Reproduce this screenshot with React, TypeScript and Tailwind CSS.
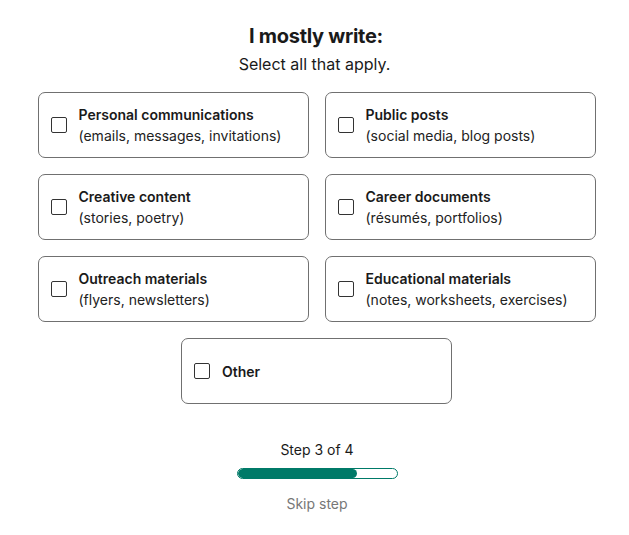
import { useState } from "react";

const options = [
  { title: "Personal communications", sub: "(emails, messages, invitations)" },
  { title: "Public posts", sub: "(social media, blog posts)" },
  { title: "Creative content", sub: "(stories, poetry)" },
  { title: "Career documents", sub: "(résumés, portfolios)" },
  { title: "Outreach materials", sub: "(flyers, newsletters)" },
  { title: "Educational materials", sub: "(notes, worksheets, exercises)" },
];

function OptionCard({
  title,
  sub,
  checked,
  onToggle,
}: {
  title: string;
  sub?: string;
  checked: boolean;
  onToggle: () => void;
}) {
  return (
    <button
      type="button"
      onClick={onToggle}
      className="flex h-[66px] w-[271px] items-center rounded-[7px] border border-[#707070] bg-white pl-[12px] text-left"
    >
      <span
        className={`mr-[12px] flex h-[16px] w-[16px] shrink-0 items-center justify-center rounded-[2px] border border-[#333] ${
          checked ? "bg-[#007a68]" : ""
        }`}
      />
      <span className="flex flex-col">
        <span className="text-[14px] leading-[21px] font-semibold text-[#1a1a1a]">{title}</span>
        {sub && <span className="text-[14px] leading-[21px] text-[#222]">{sub}</span>}
      </span>
    </button>
  );
}

export default function App() {
  const [selected, setSelected] = useState<Record<string, boolean>>({});
  const toggle = (k: string) => setSelected((p) => ({ ...p, [k]: !p[k] }));

  return (
    <div className="flex min-h-[535px] w-full flex-col items-center bg-white pt-[23px] font-['Inter',sans-serif] text-[#1a1a1a]">
      <h1 className="ml-[3px] text-[20px] leading-[26px] font-bold tracking-[-0.3px]">I mostly write:</h1>
      <p className="mt-[4px] text-[16px] leading-[22px]">Select all that apply.</p>

      {/* Options grid */}
      <div className="mt-[17px] ml-[4px] flex flex-col items-center gap-[16px]">
        <div className="grid grid-cols-2 gap-x-[16px] gap-y-[16px]">
          {options.map((o) => (
            <OptionCard
              key={o.title}
              title={o.title}
              sub={o.sub}
              checked={!!selected[o.title]}
              onToggle={() => toggle(o.title)}
            />
          ))}
        </div>
        <OptionCard title="Other" checked={!!selected.Other} onToggle={() => toggle("Other")} />
      </div>

      {/* Progress */}
      <div className="ml-[5px] flex flex-col items-center">
        <p className="mt-[36px] text-[14px] leading-[20px]">Step 3 of 4</p>
        <div className="mt-[8px] h-[11px] w-[161px] overflow-hidden rounded-full border border-[#007a68] bg-white">
          <div className="h-full w-[75%] rounded-full bg-[#007a68]" />
        </div>
        <button type="button" className="mt-[15px] text-[14px] leading-[20px] text-[#777]">
          Skip step
        </button>
      </div>
    </div>
  );
}
